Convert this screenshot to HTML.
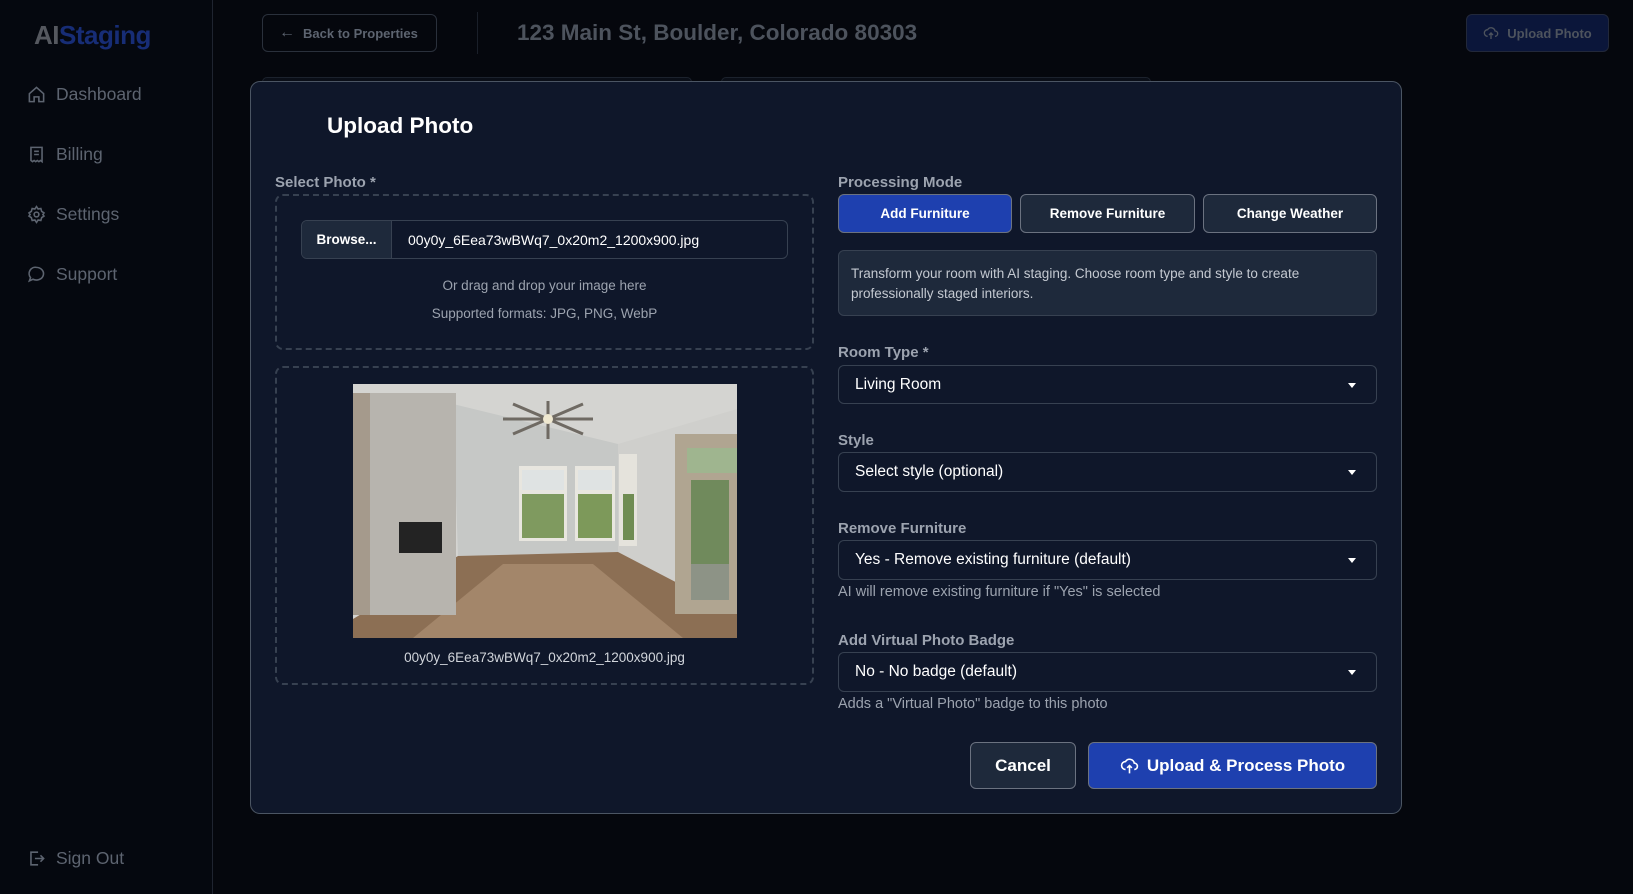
<!DOCTYPE html>
<html><head><meta charset="utf-8"><style>
*{box-sizing:border-box;margin:0;padding:0}
body{width:1633px;height:894px;background:#05070d;font-family:"Liberation Sans",sans-serif;position:relative;overflow:hidden;color:#fff}
.abs{position:absolute}
.side{left:0;top:0;width:213px;height:894px;background:#05080f;border-right:1px solid #1f2430}
.nav{left:27px;display:flex;align-items:center;gap:10px;color:#5d6470;font-size:17.5px}
.nav svg{width:19px;height:19px}
.lbl{font-size:15px;font-weight:bold;color:#9ca3af}
.sel{border:1px solid #374151;border-radius:6px;background:#0f172a;color:#fff;font-size:15.5px;padding-left:16px;display:flex;align-items:center}
.sel:after{content:"";position:absolute;right:20px;top:50%;margin-top:-2px;border:4px solid transparent;border-top:5px solid #fff;border-bottom:0}
.help{font-size:14.5px;color:#9ca3af}
.mbtn{top:194px;height:39px;border-radius:6px;border:1px solid #6b7280;background:#1e293b;font-size:13.5px;font-weight:bold;display:flex;align-items:center;justify-content:center}
</style></head><body>
<div class="abs side"></div>
<div class="abs" style="left:34px;top:20px;font-size:26px;font-weight:bold;letter-spacing:-0.5px"><span style="color:#55585f">AI</span><span style="color:#172d76">Staging</span></div>
<div class="abs nav" style="top:84px"><svg viewBox="0 0 24 24" fill="none" stroke="#5d6470" stroke-width="2"><path d="M3 11l9-8 9 8v10h-6v-6h-6v6H3z"/></svg>Dashboard</div>
<div class="abs nav" style="top:144px"><svg viewBox="0 0 24 24" fill="none" stroke="#5d6470" stroke-width="2"><path d="M5 3h14v18l-2-1.5-2 1.5-2-1.5-2 1.5-2-1.5-2 1.5-2-1.5z M9 8h6M9 12h6"/></svg>Billing</div>
<div class="abs nav" style="top:204px"><svg viewBox="0 0 24 24" fill="none" stroke="#5d6470" stroke-width="2"><circle cx="12" cy="12" r="3"/><path d="M12 2l2 3 3.5-.5 1 3.5 3 2-1.5 2 1.5 2-3 2-1 3.5-3.5-.5-2 3-2-3-3.5.5-1-3.5-3-2 1.5-2-1.5-2 3-2 1-3.5 3.5.5z"/></svg>Settings</div>
<div class="abs nav" style="top:264px"><svg viewBox="0 0 24 24" fill="none" stroke="#5d6470" stroke-width="2"><path d="M12 3a9 8 0 1 1-4.5 15L3 20l1.5-4A8 8 0 0 1 12 3z"/><path d="M8 11.5h.01M12 11.5h.01M16 11.5h.01"/></svg>Support</div>
<div class="abs nav" style="top:848px"><svg viewBox="0 0 24 24" fill="none" stroke="#5d6470" stroke-width="2"><path d="M14 4H5v16h9M10 12h11M17 8l4 4-4 4"/></svg>Sign Out</div>

<div class="abs" style="left:262px;top:14px;width:175px;height:38px;border:1px solid #2a303b;border-radius:6px;display:flex;align-items:center;padding-left:16px;gap:8px;color:#5d6470;font-size:13px;font-weight:bold"><span style="font-size:16px">←</span>Back to Properties</div>
<div class="abs" style="left:477px;top:12px;width:1px;height:42px;background:#1a1f29"></div>
<div class="abs" style="left:517px;top:20px;font-size:22.5px;font-weight:bold;color:#4d535d">123 Main St, Boulder, Colorado 80303</div>
<div class="abs" style="left:1466px;top:14px;width:143px;height:38px;background:#0b163a;border:1px solid #22283a;border-radius:6px;display:flex;align-items:center;justify-content:center;gap:8px;color:#4d535d;font-size:13px;font-weight:bold"><svg width="16" height="16" viewBox="0 0 24 24" fill="none" stroke="#4d535d" stroke-width="2"><path d="M7 17a5 5 0 0 1 0-10 6 6 0 0 1 11 2 4 4 0 0 1 0 8M12 12v9M9 15l3-3 3 3"/></svg>Upload Photo</div>
<div class="abs" style="left:262px;top:77px;width:430px;height:10px;border:1px solid #1c222d;border-radius:10px;background:#0a0e17"></div>
<div class="abs" style="left:721px;top:77px;width:430px;height:10px;border:1px solid #1c222d;border-radius:10px;background:#0a0e17"></div>

<div class="abs" style="left:250px;top:81px;width:1152px;height:733px;background:#0f172a;border:1px solid #4b5563;border-radius:10px"></div>
<div class="abs" style="left:327px;top:113px;font-size:22.5px;font-weight:bold">Upload Photo</div>

<div class="abs lbl" style="left:275px;top:174px">Select Photo *</div>
<div class="abs" style="left:275px;top:194px;width:539px;height:156px;border:2px dashed #374151;border-radius:8px"></div>
<div class="abs" style="left:301px;top:220px;width:487px;height:39px;border:1px solid #374151;border-radius:6px;overflow:hidden;display:flex;font-size:14px">
<div style="width:90px;background:#1e293b;border-right:1px solid #374151;display:flex;align-items:center;justify-content:center;font-weight:bold;font-size:13.5px">Browse...</div>
<div style="display:flex;align-items:center;padding-left:16px">00y0y_6Eea73wBWq7_0x20m2_1200x900.jpg</div></div>
<div class="abs" style="left:275px;top:278px;width:539px;text-align:center;font-size:13.5px;color:#9ca3af">Or drag and drop your image here</div>
<div class="abs" style="left:275px;top:306px;width:539px;text-align:center;font-size:13.5px;color:#9ca3af">Supported formats: JPG, PNG, WebP</div>
<div class="abs" style="left:275px;top:366px;width:539px;height:319px;border:2px dashed #374151;border-radius:8px"></div>
<svg class="abs" style="left:353px;top:384px" width="384" height="254" viewBox="0 0 384 254">
<rect width="384" height="254" fill="#d4d4d1"/>
<polygon points="100,20 265,60 265,168 105,172" fill="#c6c8c6"/>
<polygon points="265,60 384,25 384,230 265,168" fill="#cfcfcc"/>
<polygon points="0,235 105,172 265,168 384,230 384,254 0,254" fill="#8c6f54"/>
<polygon points="60,254 150,180 240,180 330,254" fill="#a3866a"/>
<rect x="0" y="9" width="103" height="222" fill="#b7b4ae"/>
<rect x="0" y="9" width="17" height="222" fill="#a59a8c"/>
<rect x="46" y="138" width="43" height="31" fill="#232323"/>
<rect x="166" y="82" width="48" height="75" fill="#e8e6df"/>
<rect x="169" y="110" width="42" height="44" fill="#7f9a5f"/>
<rect x="169" y="86" width="42" height="20" fill="#dfe3e3"/>
<rect x="222" y="82" width="40" height="75" fill="#e8e6df"/>
<rect x="225" y="110" width="34" height="44" fill="#7d995a"/>
<rect x="225" y="86" width="34" height="20" fill="#dfe3e3"/>
<rect x="266" y="70" width="18" height="92" fill="#e5e3dc"/>
<rect x="270" y="110" width="11" height="46" fill="#6f8c52"/>
<rect x="322" y="50" width="62" height="180" fill="#b0a591"/>
<rect x="334" y="64" width="50" height="25" fill="#9fb58f"/>
<rect x="338" y="96" width="38" height="120" fill="#708a5c"/>
<rect x="338" y="180" width="38" height="36" fill="#8d9386"/>
<g stroke="#6f6a63" stroke-width="3"><path d="M150 35h90M160 20l70 30M230 20l-70 30M195 17v38"/></g>
<circle cx="195" cy="35" r="5" fill="#efe8d0"/>
</svg>
<div class="abs" style="left:275px;top:650px;width:539px;text-align:center;font-size:13.5px;color:#d1d5db">00y0y_6Eea73wBWq7_0x20m2_1200x900.jpg</div>

<div class="abs lbl" style="left:838px;top:174px">Processing Mode</div>
<div class="abs mbtn" style="left:838px;width:174px;background:#1e40af">Add Furniture</div>
<div class="abs mbtn" style="left:1020px;width:175px">Remove Furniture</div>
<div class="abs mbtn" style="left:1203px;width:174px">Change Weather</div>
<div class="abs" style="left:838px;top:250px;width:539px;height:66px;background:#1e293b;border:1px solid #374151;border-radius:6px;padding:13px 12px;font-size:13.5px;line-height:20px;color:#c4c9d1">Transform your room with AI staging. Choose room type and style to create professionally staged interiors.</div>

<div class="abs lbl" style="left:838px;top:344px">Room Type *</div>
<div class="abs sel" style="left:838px;top:365px;width:539px;height:39px">Living Room</div>
<div class="abs lbl" style="left:838px;top:432px">Style</div>
<div class="abs sel" style="left:838px;top:452px;width:539px;height:40px">Select style (optional)</div>
<div class="abs lbl" style="left:838px;top:520px">Remove Furniture</div>
<div class="abs sel" style="left:838px;top:540px;width:539px;height:40px">Yes - Remove existing furniture (default)</div>
<div class="abs help" style="left:838px;top:584px">AI will remove existing furniture if "Yes" is selected</div>
<div class="abs lbl" style="left:838px;top:632px">Add Virtual Photo Badge</div>
<div class="abs sel" style="left:838px;top:652px;width:539px;height:40px">No - No badge (default)</div>
<div class="abs help" style="left:838px;top:696px">Adds a "Virtual Photo" badge to this photo</div>

<div class="abs" style="left:970px;top:742px;width:106px;height:47px;background:#1e293b;border:1px solid #6b7280;border-radius:6px;display:flex;align-items:center;justify-content:center;font-size:17px;font-weight:bold">Cancel</div>
<div class="abs" style="left:1088px;top:742px;width:289px;height:47px;background:#1e40af;border:1px solid #6b7280;border-radius:6px;display:flex;align-items:center;justify-content:center;gap:8px;font-size:17px;font-weight:bold"><svg width="19" height="19" viewBox="0 0 24 24" fill="none" stroke="#fff" stroke-width="2"><path d="M7 17a5 5 0 0 1 0-10 6 6 0 0 1 11 2 4 4 0 0 1 0 8M12 12v10M9 15l3-3 3 3"/></svg>Upload &amp; Process Photo</div>
</body></html>
